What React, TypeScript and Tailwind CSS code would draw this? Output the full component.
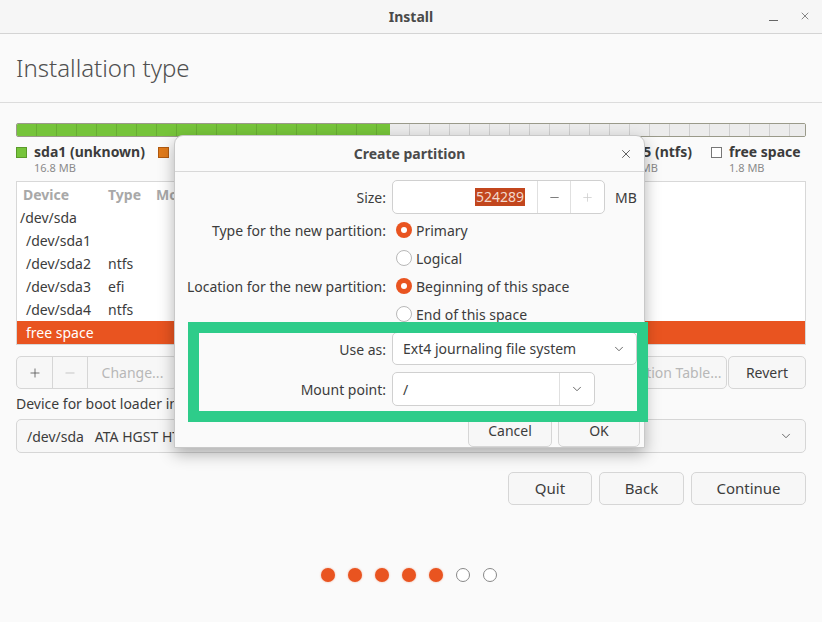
import { ChevronDown, Minus, Plus, X } from "lucide-react";

const rows = [
    { dev: "/dev/sda", type: "", indent: false },
    { dev: "/dev/sda1", type: "", indent: true },
    { dev: "/dev/sda2", type: "ntfs", indent: true },
    { dev: "/dev/sda3", type: "efi", indent: true },
    { dev: "/dev/sda4", type: "ntfs", indent: true },
];

function Radio({ checked, label }: { checked: boolean; label: string }) {
    return (
        <div className="flex items-center gap-[4px] h-[28px] ml-[4px]">
            {checked ? (
                <span className="w-[16px] h-[16px] rounded-full bg-[#e95420] flex items-center justify-center">
                    <span className="w-[6px] h-[6px] rounded-full bg-white" />
                </span>
            ) : (
                <span className="w-[16px] h-[16px] rounded-full border border-[#b8b8b8] bg-white" />
            )}
            <span>{label}</span>
        </div>
    );
}

function Btn({ children, className = "" }: { children: React.ReactNode; className?: string }) {
    return (
        <div
            className={`h-[33px] flex items-center justify-center rounded-[5px] border border-[#d6d6d6] bg-[#f7f7f7] text-[#3d3d3d] ${className}`}
        >
            {children}
        </div>
    );
}

function Dialog() {
    return (
        <div className="absolute left-[174px] top-[135px] w-[471px] h-[313px] rounded-t-[9px] bg-[#fafafa] border border-[#c8c8c8] shadow-[0_6px_16px_rgba(0,0,0,0.3)] text-[14px] text-[#3c3c3c]">
            <div className="h-[36px] border-b border-[#d8d8d8] flex items-center justify-center relative">
                <span className="font-bold text-[#4a4a4a]">Create partition</span>
                <X className="absolute right-[11px] top-[11px] w-[14px] h-[14px] text-[#555]" strokeWidth={1.6} />
            </div>

            <div className="grid grid-cols-[211px_1fr] gap-x-[6px] pt-[8px] pr-[8px]">
                <div className="h-[34px] flex items-center justify-end">Size:</div>
                <div className="flex items-center gap-[10px]">
                    <div className="w-[213px] h-[34px] flex rounded-[5px] border border-[#d0d0d0] bg-white">
                        <div className="flex-1 flex items-center justify-end pr-[12px]">
                            <span className="bg-[#c2461d] text-[#f2d8cc] leading-[18px] px-[1px]">524289</span>
                        </div>
                        <div className="w-[33px] border-l border-[#e0e0e0] flex items-center justify-center">
                            <Minus className="w-[13px] h-[13px] text-[#555]" strokeWidth={1.4} />
                        </div>
                        <div className="w-[34px] border-l border-[#e0e0e0] flex items-center justify-center">
                            <Plus className="w-[13px] h-[13px] text-[#ccc]" strokeWidth={1.4} />
                        </div>
                    </div>
                    <span>MB</span>
                </div>

                <div className="h-[28px] mt-[2px] flex items-center justify-end">Type for the new partition:</div>
                <div className="mt-[2px]">
                    <Radio checked label="Primary" />
                    <Radio checked={false} label="Logical" />
                </div>

                <div className="h-[28px] flex items-center justify-end">Location for the new partition:</div>
                <div>
                    <Radio checked label="Beginning of this space" />
                    <Radio checked={false} label="End of this space" />
                </div>

                <div className="h-[34px] mt-[4px] flex items-center justify-end">Use as:</div>
                <div className="mt-[4px] w-[245px] h-[33px] rounded-[5px] border border-[#d0d0d0] bg-white flex items-center justify-between pl-[10px] pr-[10px]">
                    <span>Ext4 journaling file system</span>
                    <ChevronDown className="w-[14px] h-[14px] text-[#555]" strokeWidth={1.5} />
                </div>

                <div className="h-[34px] mt-[6px] flex items-center justify-end">Mount point:</div>
                <div className="mt-[6px] w-[203px] h-[34px] rounded-[5px] border border-[#d0d0d0] bg-white flex">
                    <div className="flex-1 flex items-center pl-[10px]">/</div>
                    <div className="w-[35px] border-l border-[#e0e0e0] flex items-center justify-center">
                        <ChevronDown className="w-[14px] h-[14px] text-[#555]" strokeWidth={1.5} />
                    </div>
                </div>
            </div>

            <div className="flex justify-end gap-[6px] pr-[4px] mt-[8px]">
                <Btn className="w-[84px] h-[32px]">Cancel</Btn>
                <Btn className="w-[82px] h-[32px]">OK</Btn>
            </div>

            {/* annotation box */}
            <div className="absolute left-[13px] top-[186px] w-[460px] h-[100px] border-[11px] border-[#2ecc8a]" />
        </div>
    );
}

export default function App() {
    return (
        <div className="relative w-[822px] h-[622px] overflow-hidden bg-[#fafafa] text-[14px] text-[#3c3c3c] font-['Noto_Sans',sans-serif]">
            {/* title bar */}
            <div className="h-[34px] border-b border-[#d4d4d4] bg-[#f6f6f6] flex items-center justify-center relative">
                <span className="font-bold text-[#4a4a4a]">Install</span>
                <span className="absolute right-[44px] top-[10px] w-[9px] h-[1px] mt-[10px] bg-[#666]" />
                <X className="absolute right-[11px] top-[10px] w-[12px] h-[12px] text-[#555]" strokeWidth={1.4} />
            </div>

            <div className="h-[69px] border-b border-[#dcdcdc] flex items-center pl-[16px]">
                <span className="text-[24px] text-[#505050] font-light">Installation type</span>
            </div>

            <div className="px-[16px] pt-[20px]">
                {/* partition bar */}
                <div className="h-[14px] flex rounded-[2px] overflow-hidden border border-[#9a9a8a]">
                    <div className="w-[373px] bg-[#76c43a] bg-[repeating-linear-gradient(90deg,transparent_0_19px,rgba(0,0,0,0.12)_19px_20px)]" />
                    <div className="flex-1 bg-[#ececec] bg-[repeating-linear-gradient(90deg,transparent_0_19px,rgba(0,0,0,0.12)_19px_20px)]" />
                </div>

                {/* legend */}
                <div className="flex mt-[6px] h-[33px] leading-[18px]">
                    <div className="w-[142px]">
                        <div className="flex items-center gap-[7px] font-bold">
                            <span className="w-[11px] h-[11px] bg-[#76c43a] border border-[#5a9a2a]" />
                            sda1 (unknown)
                        </div>
                        <div className="pl-[18px] text-[11px] leading-[14px] text-[#8a8a8a]">16.8 MB</div>
                    </div>
                    <div className="w-[461px]">
                        <div className="flex items-center gap-[7px] font-bold">
                            <span className="w-[11px] h-[11px] bg-[#e07a1a] border border-[#b05a10]" />
                            sda2 (ntfs)
                        </div>
                    </div>
                    <div className="w-[92px]">
                        <div className="font-bold">sda5 (ntfs)</div>
                        <div className="text-[11px] leading-[14px] text-[#8a8a8a]">556 MB</div>
                    </div>
                    <div>
                        <div className="flex items-center gap-[7px] font-bold">
                            <span className="w-[11px] h-[11px] bg-white border border-[#777]" />
                            free space
                        </div>
                        <div className="pl-[18px] text-[11px] leading-[14px] text-[#8a8a8a]">1.8 MB</div>
                    </div>
                </div>

                {/* partitions table */}
                <div className="mt-[5px] h-[164px] border border-[#d8d8d8] bg-white">
                    <div className="h-[24px] flex items-center font-bold text-[#a8a8a8]">
                        <span className="w-[91px] pl-[6px]">Device</span>
                        <span className="w-[48px]">Type</span>
                        <span>Mount point</span>
                    </div>
                    {rows.map((r) => (
                        <div key={r.dev} className="h-[23px] flex items-center">
                            <span className={`w-[91px] ${r.indent ? "pl-[9px]" : "pl-[3px]"}`}>{r.dev}</span>
                            <span>{r.type}</span>
                        </div>
                    ))}
                    <div className="h-[23px] flex items-center bg-[#e95420] text-white pl-[9px]">free space</div>
                </div>

                {/* table buttons */}
                <div className="mt-[11px] flex">
                    <div className="flex h-[33px] rounded-[5px] border border-[#d6d6d6] bg-[#f7f7f7]">
                        <div className="w-[35px] flex items-center justify-center">
                            <Plus className="w-[14px] h-[14px] text-[#555]" strokeWidth={1.4} />
                        </div>
                        <div className="w-[35px] border-l border-[#d6d6d6] flex items-center justify-center">
                            <Minus className="w-[14px] h-[14px] text-[#bbb]" strokeWidth={1.4} />
                        </div>
                        <div className="w-[90px] border-l border-[#d6d6d6] flex items-center justify-center text-[#b8b8b8]">
                            Change...
                        </div>
                    </div>
                    <div className="flex-1" />
                    <Btn className="w-[150px] text-[#b8b8b8]">New Partition Table...</Btn>
                    <Btn className="w-[78px] ml-[1px]">Revert</Btn>
                </div>

                <div className="mt-[2px] h-[24px] flex items-center">Device for boot loader installation:</div>

                <div className="mt-[4px] h-[34px] rounded-[5px] border border-[#d6d6d6] bg-[#f7f7f7] flex items-center justify-between pl-[10px] pr-[12px]">
                    <span>/dev/sda&nbsp;&nbsp;&nbsp;ATA HGST HTS721010A9E630 (1.0 TB)</span>
                    <ChevronDown className="w-[14px] h-[14px] text-[#555]" strokeWidth={1.5} />
                </div>

                <div className="mt-[19px] flex justify-end gap-[7px]">
                    <Btn className="w-[84px] text-[15px]">Quit</Btn>
                    <Btn className="w-[85px] text-[15px]">Back</Btn>
                    <Btn className="w-[115px] text-[15px]">Continue</Btn>
                </div>

                <div className="mt-[63px] flex justify-center gap-[13px] pr-[4px]">
                    {[0, 1, 2, 3, 4, 5, 6].map((i) =>
                        i < 5 ? (
                            <span key={i} className="w-[14px] h-[14px] rounded-full bg-[#e95420] shadow-[0_0_2px_rgba(233,84,32,0.5)]" />
                        ) : (
                            <span key={i} className="w-[14px] h-[14px] rounded-full border border-[#888] bg-white" />
                        )
                    )}
                </div>
            </div>

            <Dialog />
        </div>
    );
}
